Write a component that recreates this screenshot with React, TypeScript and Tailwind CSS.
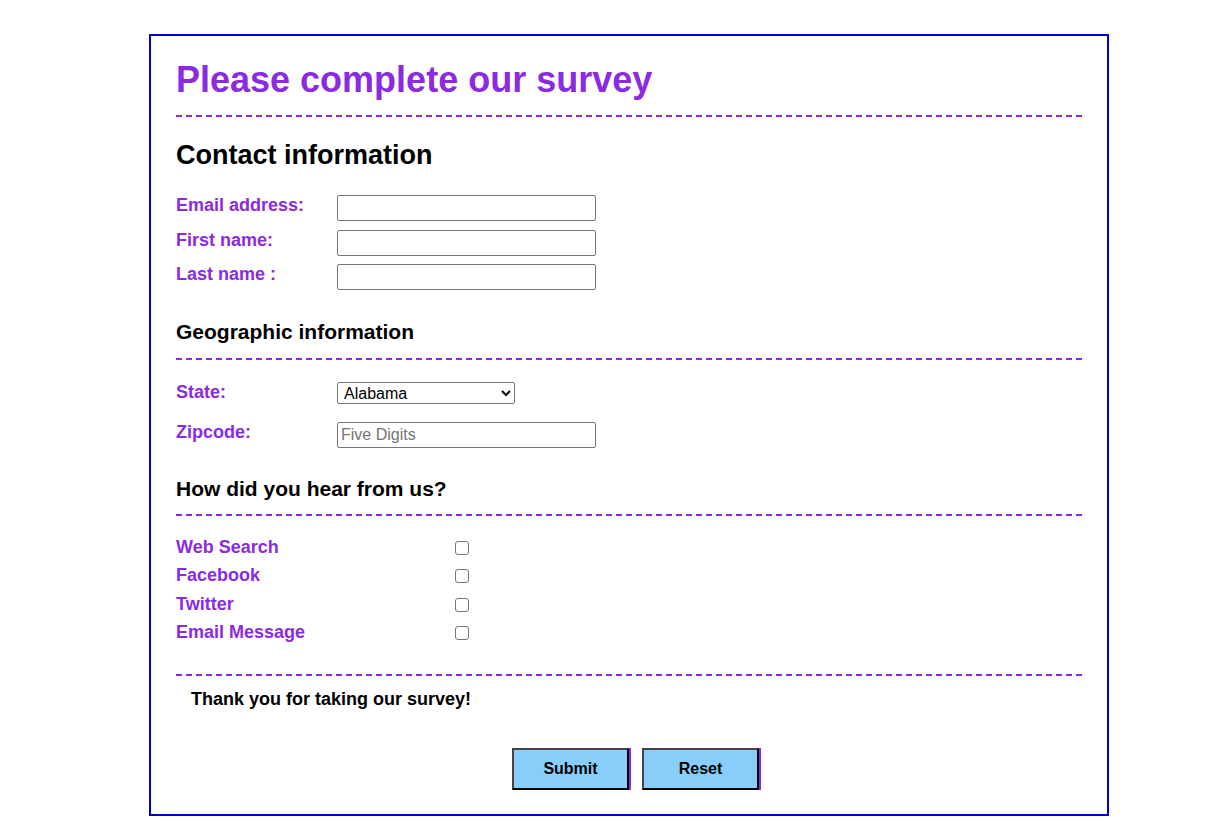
import React from 'react';

const labelCls = 'font-bold text-[18px] leading-[21px] text-[#8a2be2]';
const inputCls = 'w-[259px] h-[26px] border border-[#767676] rounded-[2px] px-[3px] text-[16px] bg-white outline-none';

const Divider = () => <div className="border-t-2 border-dashed border-[#8a2be2]" />;

const sources = ['Web Search', 'Facebook', 'Twitter', 'Email Message'];

export default function App() {
  return (
    <div className="bg-white min-h-screen pt-[34px]" style={{ fontFamily: '"Liberation Sans", Arial, sans-serif' }}>
      <form
        className="ml-[149px] w-[960px] border-2 border-[#0000cd] px-[25px] pt-[23px] pb-[24px]"
        onSubmit={(e) => e.preventDefault()}
      >
        <h1 className="text-[36px] font-bold text-[#8a2be2] leading-[41px]">Please complete our survey</h1>
        <div className="mt-[15px]">
          <Divider />
        </div>

        <h2 className="mt-[23px] text-[27px] font-bold text-black leading-[31px]">Contact information</h2>
        <div className="mt-[24px] flex flex-col gap-[8.5px]">
          {['Email address:', 'First name:', 'Last name :'].map((l) => (
            <div key={l} className="flex items-start">
              <label className={`${labelCls} w-[161px]`}>{l}</label>
              <input type="text" className={inputCls} />
            </div>
          ))}
        </div>

        <h3 className="mt-[30px] text-[21px] font-bold text-black leading-[24px]">Geographic information</h3>
        <div className="mt-[14px]">
          <Divider />
        </div>
        <div className="mt-[22px] flex items-start">
          <label className={`${labelCls} w-[161px]`}>State:</label>
          <select className="w-[178px] h-[22px] border border-[#767676] rounded-[2px] text-[16px] bg-white px-[2px] text-black">
            <option>Alabama</option>
            <option>Alaska</option>
            <option>Arizona</option>
          </select>
        </div>
        <div className="mt-[18px] flex items-start">
          <label className={`${labelCls} w-[161px]`}>Zipcode:</label>
          <input type="text" placeholder="Five Digits" className={`${inputCls} placeholder:text-[#757575]`} />
        </div>

        <h3 className="mt-[29px] text-[21px] font-bold text-black leading-[24px]">How did you hear from us?</h3>
        <div className="mt-[13px]">
          <Divider />
        </div>
        <div className="mt-[21px] flex flex-col">
          {sources.map((s) => (
            <div key={s} className="flex items-start h-[28.33px]">
              <label className={`${labelCls} w-[279px]`}>{s}</label>
              <input
                type="checkbox"
                className="appearance-none w-[14px] h-[14px] mt-[4px] border border-[#767676] rounded-[3px] bg-white"
              />
            </div>
          ))}
        </div>

        <div className="mt-[24px]">
          <Divider />
        </div>
        <p className="mt-[13px] ml-[15px] font-bold text-[18px] leading-[21px] text-black">Thank you for taking our survey!</p>

        <div className="mt-[38px] flex justify-center gap-[13px] pl-[13px]">
          {['Submit', 'Reset'].map((b) => (
            <button
              key={b}
              type={b === 'Reset' ? 'reset' : 'submit'}
              className="w-[117px] h-[42px] bg-[#87cefa] border-2 border-[#444] border-r-black border-b-black shadow-[2px_0_0_#8a2be2] font-bold text-[16px] text-black"
            >
              {b}
            </button>
          ))}
        </div>
      </form>
    </div>
  );
}
